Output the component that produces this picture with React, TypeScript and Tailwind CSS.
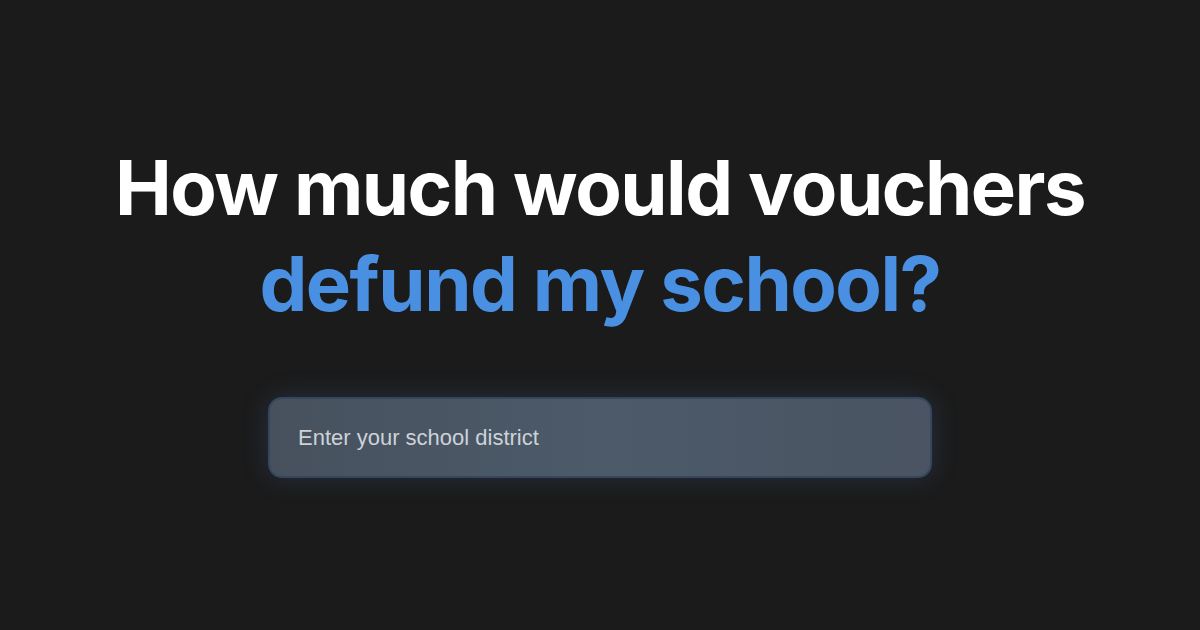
export default function App() {
  return (
    <div className="w-[1200px] h-[630px] bg-[#1b1b1b] flex flex-col items-center pt-[139px] overflow-hidden">
      <h1
        className="text-center font-bold text-[76px] leading-[96px] tracking-[-1.5px]"
        style={{ fontFamily: 'Inter, "Noto Sans", sans-serif' }}
      >
        <span className="block text-white">How much would vouchers</span>
        <span className="block text-[#4a90e2]">defund my school?</span>
      </h1>
      <div className="mt-[66px] w-[664px] h-[81px] rounded-[14px] border-2 border-[#35465e] bg-gradient-to-r from-[#47515e] via-[#4c5a69] to-[#4a5462] shadow-[0_0_26px_rgba(70,110,170,0.25)] flex items-center pl-[28px]">
        <span
          className="text-[22px] text-[#cdd2d9]"
          style={{ fontFamily: '"Liberation Sans", Arial, sans-serif' }}
        >
          Enter your school district
        </span>
      </div>
    </div>
  );
}
